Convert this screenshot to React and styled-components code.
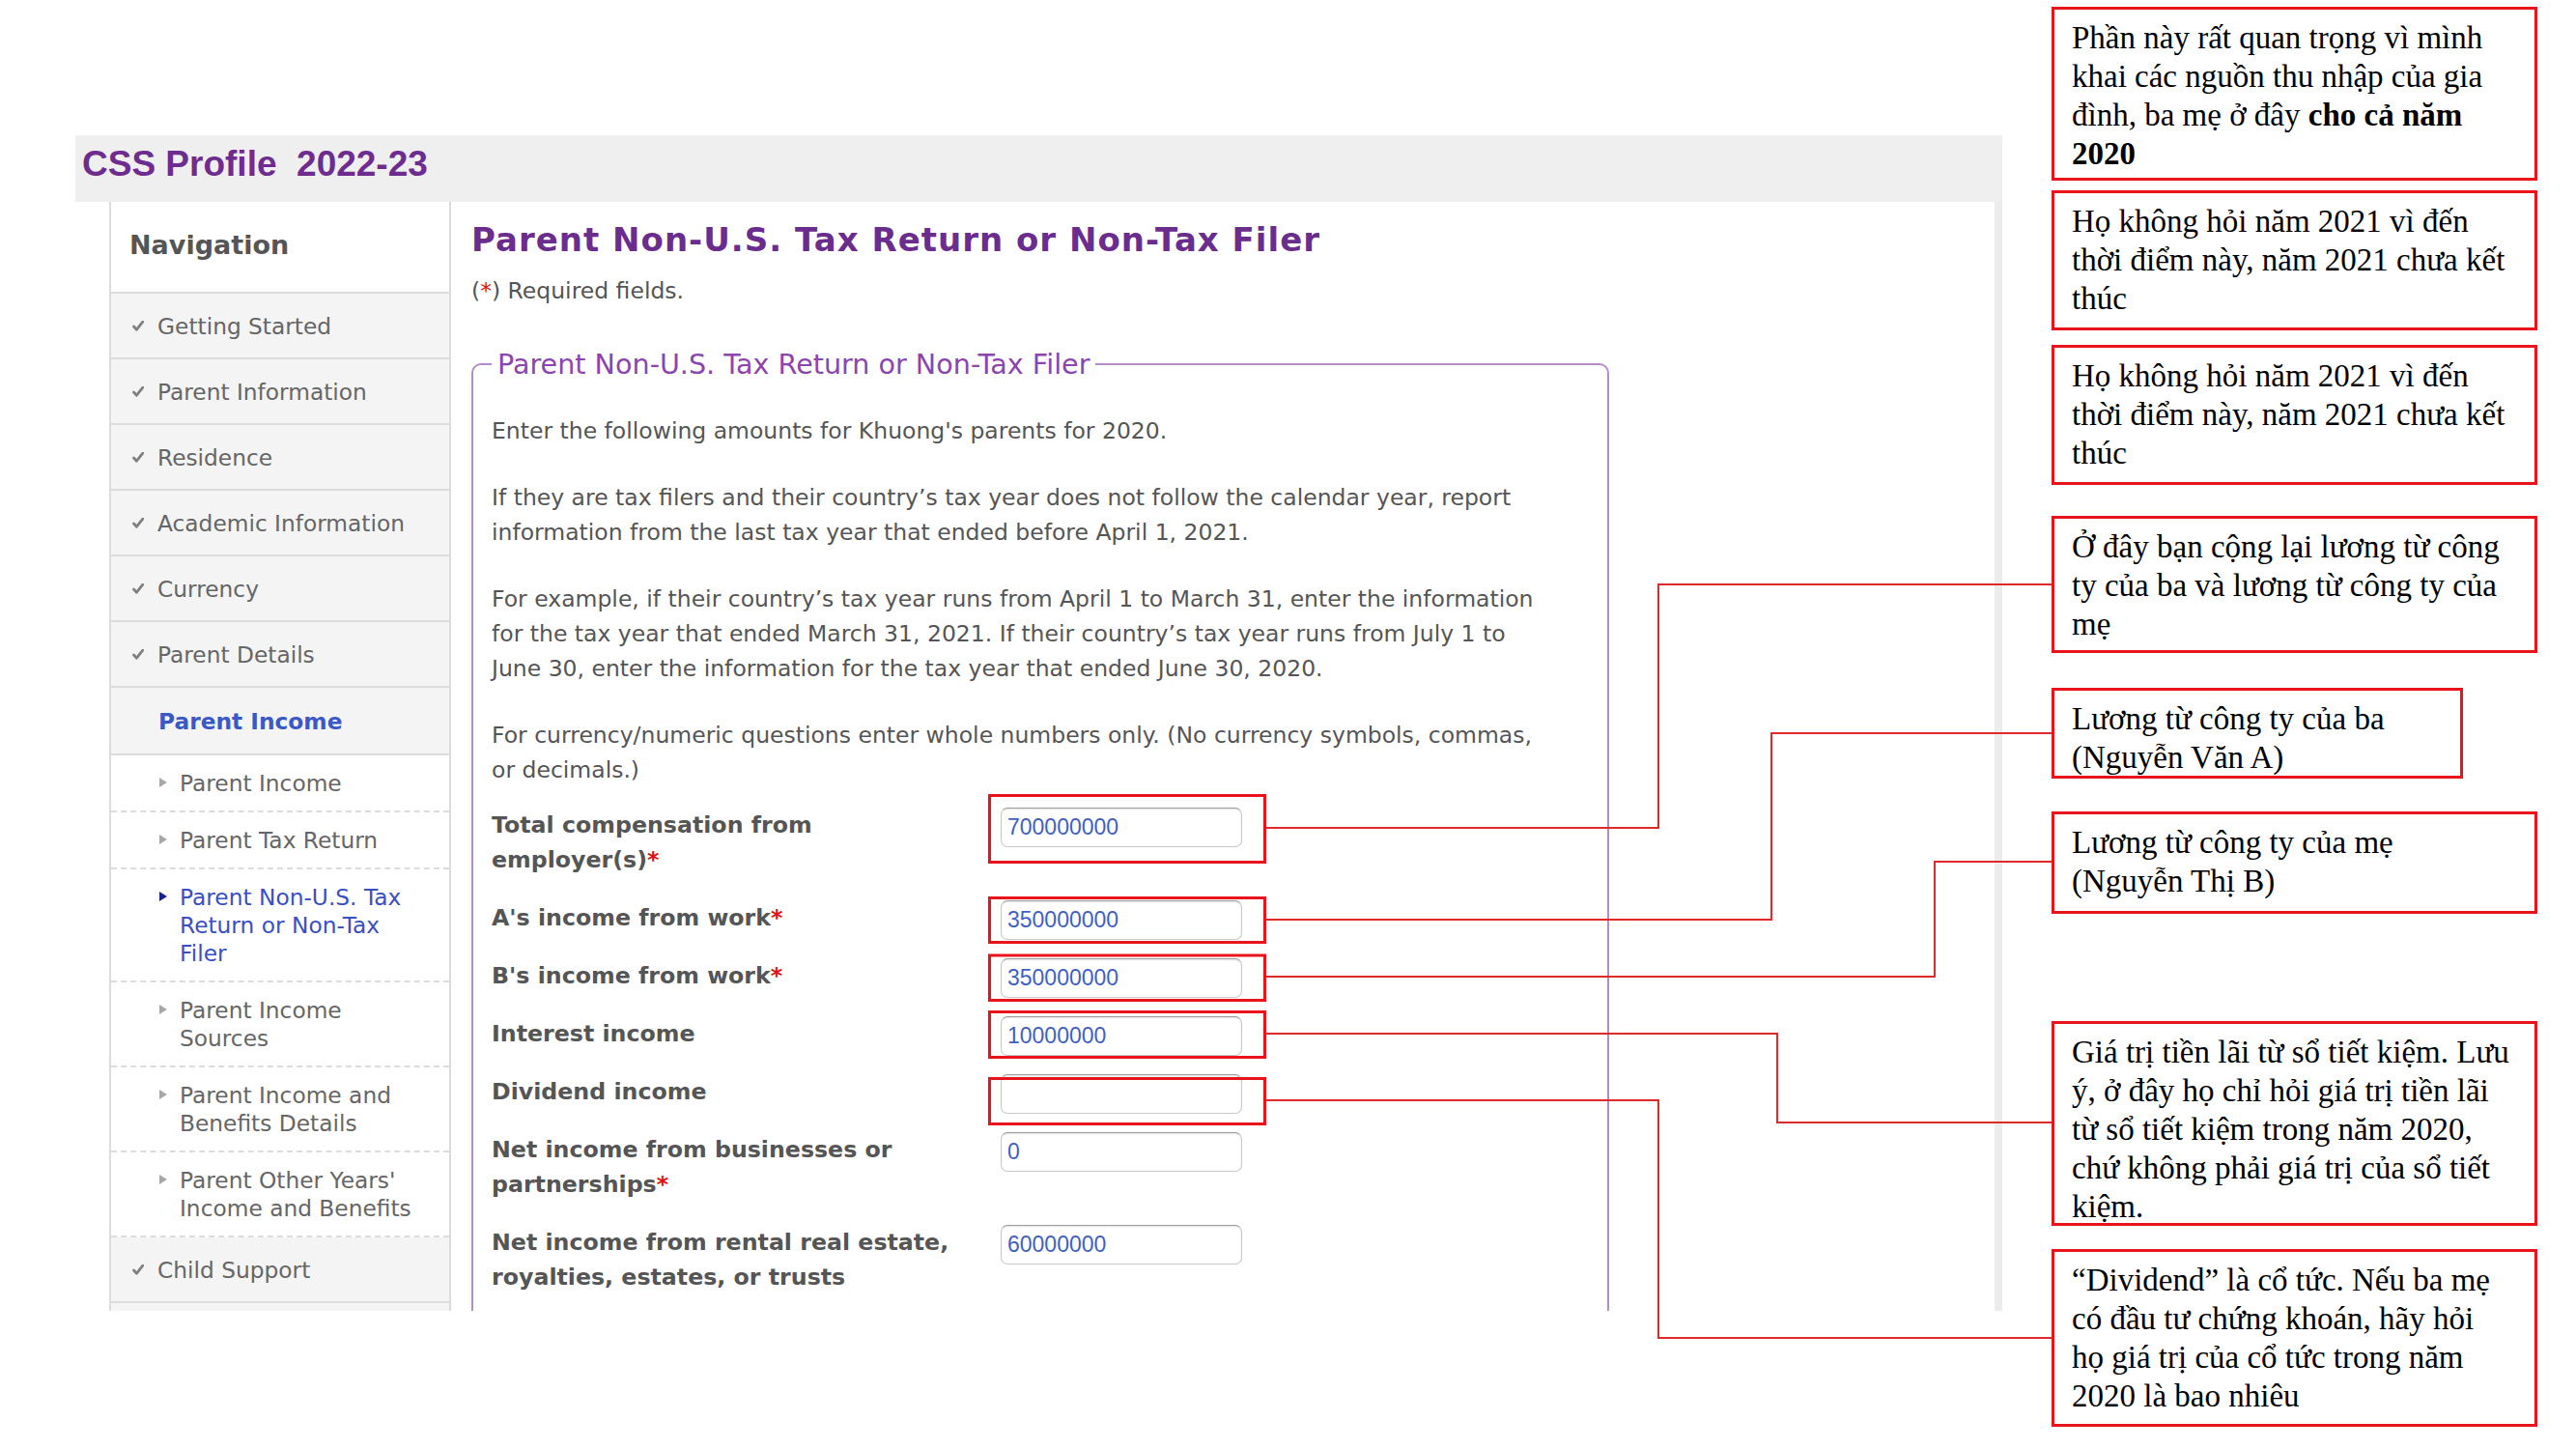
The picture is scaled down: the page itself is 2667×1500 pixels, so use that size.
import React from "react";
import styled, { createGlobalStyle } from "styled-components";

const GlobalStyle = createGlobalStyle`
  html, body {
    margin: 0;
    padding: 0;
    background: #fff;
  }
  body {
    font-family: "DejaVu Sans", Verdana, sans-serif;
  }
  * {
    box-sizing: border-box;
  }
`;

const Canvas = styled.div`
  position: relative;
  width: 2667px;
  height: 1500px;
  display: flex;
  align-items: flex-start;
  overflow: hidden;
  background: #fff;
`;

/* ---------- the CSS Profile screen ---------- */

const Screen = styled.div`
  margin: 140px 0 0 78px;
  width: 1995px;
  height: 1217px;
  flex: none;
  display: flex;
  flex-direction: column;
  overflow: hidden;
`;

const TopBar = styled.header`
  height: 69px;
  flex: none;
  background: #efefef;
  padding: 9px 0 0 7px;
`;

const Brand = styled.h1`
  margin: 0;
  font: bold 37px/42px "Liberation Sans", Arial, sans-serif;
  color: #6d2c8e;
  white-space: pre;
`;

const Body = styled.div`
  flex: 1;
  min-height: 0;
  display: flex;
  padding-left: 35px;
`;

const Sidebar = styled.nav`
  width: 354px;
  flex: none;
  border-left: 2px solid #dcdcdc;
  border-right: 2px solid #dcdcdc;
`;

const NavHead = styled.div`
  height: 95px;
  padding: 29px 0 0 19px;
  border-bottom: 2px solid #dcdcdc;
  font: bold 27px/32px "DejaVu Sans", Verdana, sans-serif;
  color: #555;
`;

const NavItem = styled.div`
  height: ${(p) => (p.$active ? 70 : 68)}px;
  display: flex;
  align-items: center;
  gap: 14px;
  padding-left: ${(p) => (p.$active ? 49 : 22)}px;
  background: #f4f4f4;
  border-bottom: 2px solid #dcdcdc;
  font-size: 23.3px;
  font-weight: ${(p) => (p.$active ? "bold" : "normal")};
  color: ${(p) => (p.$active ? "#3b59c6" : "#666")};
`;

const SubItem = styled.div`
  display: flex;
  align-items: flex-start;
  gap: 13px;
  padding: 14px 0 14px 50px;
  background: #fff;
  border-bottom: 2px dashed #dcdcdc;
  font-size: 23.3px;
  line-height: 29px;
  color: ${(p) => (p.$current ? "#3a4fc2" : "#666")};
  white-space: nowrap;
`;

const Marker = styled.span`
  flex: none;
  width: 0;
  height: 0;
  margin-top: 9px;
  border-left: 8px solid ${(p) => (p.$current ? "#1b1f9c" : "#a8a8a8")};
  border-top: 5px solid transparent;
  border-bottom: 5px solid transparent;
`;

const Main = styled.main`
  flex: 1;
  min-width: 0;
  padding: 19px 21px;
  border-right: 8px solid #ececec;
  color: #555;
`;

const PageTitle = styled.h2`
  margin: 0;
  font: bold 34px/40px "DejaVu Sans", Verdana, sans-serif;
  letter-spacing: 1px;
  color: #6b2d8d;
`;

const Required = styled.p`
  margin: 17px 0 0;
  font-size: 23.5px;
  line-height: 32px;
  color: #555;
`;

const Star = styled.span`
  color: #e01010;
`;

const Fieldset = styled.fieldset`
  width: 1178px;
  margin: 43px 0 0;
  padding: 0 19px 80px;
  border: 2px solid #b58ccb;
  border-radius: 10px;
  min-inline-size: 0;
`;

const Legend = styled.legend`
  padding: 0 6px;
  font-size: 28.6px;
  line-height: 34px;
  color: #8b45ad;
`;

const Note = styled.p`
  margin: 33px 0 0;
  font-size: 23.5px;
  line-height: 36px;
  white-space: nowrap;

  &:first-of-type {
    margin-top: 34px;
  }
`;

const Form = styled.div`
  margin-top: 21px;
  display: grid;
  grid-template-columns: 527px 250px;
  align-items: start;
`;

const Label = styled.label`
  margin-bottom: 24px;
  font: bold 23.7px/36px "DejaVu Sans", Verdana, sans-serif;
  color: #555;
  white-space: nowrap;
`;

const Input = styled.input`
  width: 250px;
  height: 41px;
  margin: 0 0 -5px;
  padding: 0 6px;
  border: 1px solid #c9c9c9;
  border-top-color: #9c9c9c;
  border-radius: 7px;
  box-shadow: inset 0 1px 2px rgba(0, 0, 0, 0.12);
  font: 23px "Liberation Sans", Arial, sans-serif;
  color: #3f5fc4;
  background: #fff;
  outline: none;
`;

/* ---------- annotation call-outs ---------- */

const Notes = styled.aside`
  flex: none;
  margin: 7px 0 0 51px;
  display: flex;
  flex-direction: column;
  align-items: flex-start;
`;

const Callout = styled.div`
  width: ${(p) => p.$w}px;
  height: ${(p) => p.$h}px;
  margin-top: ${(p) => p.$mt}px;
  padding: 9px 10px 0 18px;
  border: 3px solid #e8141c;
  font: 33px/40px "Liberation Serif", "Times New Roman", serif;
  color: #000;
  white-space: nowrap;

  b {
    font-weight: bold;
  }
`;

const Overlay = styled.svg`
  position: absolute;
  left: 0;
  top: 0;
  pointer-events: none;
`;

function Check() {
  return (
    <svg width="12" height="11" viewBox="0 0 12 11">
      <path
        d="M1.5 6 L4.5 9.2 L10.8 1.2"
        fill="none"
        stroke="#808080"
        strokeWidth="2.8"
        strokeLinecap="round"
        strokeLinejoin="round"
      />
    </svg>
  );
}

const doneBefore = [
  "Getting Started",
  "Parent Information",
  "Residence",
  "Academic Information",
  "Currency",
  "Parent Details",
];

const subItems = [
  { id: 1, lines: ["Parent Income"] },
  { id: 2, lines: ["Parent Tax Return"] },
  { id: 3, lines: ["Parent Non-U.S. Tax", "Return or Non-Tax", "Filer"], current: true },
  { id: 4, lines: ["Parent Income", "Sources"] },
  { id: 5, lines: ["Parent Income and", "Benefits Details"] },
  { id: 6, lines: ["Parent Other Years'", "Income and Benefits"] },
];

const fields = [
  { id: 1, label: ["Total compensation from", "employer(s)"], req: true, value: "700000000" },
  { id: 2, label: ["A's income from work"], req: true, value: "350000000" },
  { id: 3, label: ["B's income from work"], req: true, value: "350000000" },
  { id: 4, label: ["Interest income"], value: "10000000" },
  { id: 5, label: ["Dividend income"], value: "" },
  { id: 6, label: ["Net income from businesses or", "partnerships"], req: true, value: "0" },
  { id: 7, label: ["Net income from rental real estate,", "royalties, estates, or trusts"], value: "60000000" },
];

const callouts = [
  {
    id: 1, mt: 0, h: 180, w: 503,
    lines: [
      "Phần này rất quan trọng vì mình",
      "khai các nguồn thu nhập của gia",
      <>đình, ba mẹ ở đây <b>cho cả năm</b></>,
      <b>2020</b>,
    ],
  },
  {
    id: 2, mt: 10, h: 145, w: 503,
    lines: ["Họ không hỏi năm 2021 vì đến", "thời điểm này, năm 2021 chưa kết", "thúc"],
  },
  {
    id: 3, mt: 15, h: 145, w: 503,
    lines: ["Họ không hỏi năm 2021 vì đến", "thời điểm này, năm 2021 chưa kết", "thúc"],
  },
  {
    id: 4, mt: 32, h: 142, w: 503,
    lines: ["Ở đây bạn cộng lại lương từ công", "ty của ba và lương từ công ty của", "mẹ"],
  },
  { id: 5, mt: 36, h: 94, w: 426, lines: ["Lương từ công ty của ba", "(Nguyễn Văn A)"] },
  { id: 6, mt: 34, h: 106, w: 503, lines: ["Lương từ công ty của mẹ", "(Nguyễn Thị B)"] },
  {
    id: 7, mt: 111, h: 212, w: 503,
    lines: [
      "Giá trị tiền lãi từ sổ tiết kiệm. Lưu",
      "ý, ở đây họ chỉ hỏi giá trị tiền lãi",
      "từ sổ tiết kiệm trong năm 2020,",
      "chứ không phải giá trị của sổ tiết",
      "kiệm.",
    ],
  },
  {
    id: 8, mt: 24, h: 184, w: 503,
    lines: [
      "“Dividend” là cổ tức. Nếu ba mẹ",
      "có đầu tư chứng khoán, hãy hỏi",
      "họ giá trị của cổ tức trong năm",
      "2020 là bao nhiêu",
    ],
  },
];

// highlight boxes round the inputs, and the elbow lines to the call-outs
const highlights = [
  { y: 823.5, h: 69 },
  { y: 929.5, h: 46 },
  { y: 989, h: 46.5 },
  { y: 1047.5, h: 47 },
  { y: 1116.5, h: 47 },
];

const connectors = [
  "M1311 857 H1717 V605 H2124",
  "M1311 952 H1834 V759 H2124",
  "M1311 1011 H2003 V892 H2124",
  "M1311 1070 H1840 V1162 H2124",
  "M1311 1139 H1717 V1385 H2124",
];

function Lines({ lines }) {
  return lines.map((line, i) => (
    <React.Fragment key={i}>
      {i > 0 && <br />}
      {line}
    </React.Fragment>
  ));
}

export default function App() {
  return (
    <>
      <GlobalStyle />
      <Canvas>
        <Screen>
          <TopBar>
            <Brand>CSS Profile  2022-23</Brand>
          </TopBar>
          <Body>
            <Sidebar>
              <NavHead>Navigation</NavHead>
              {doneBefore.map((label) => (
                <NavItem key={label}>
                  <Check />
                  {label}
                </NavItem>
              ))}
              <NavItem $active>Parent Income</NavItem>
              {subItems.map(({ id, lines, current }) => (
                <SubItem key={id} $current={current}>
                  <Marker $current={current} />
                  <span>
                    <Lines lines={lines} />
                  </span>
                </SubItem>
              ))}
              <NavItem>
                <Check />
                Child Support
              </NavItem>
              <NavItem />
            </Sidebar>

            <Main>
              <PageTitle>Parent Non-U.S. Tax Return or Non-Tax Filer</PageTitle>
              <Required>
                (<Star>*</Star>) Required fields.
              </Required>

              <Fieldset>
                <Legend>Parent Non-U.S. Tax Return or Non-Tax Filer</Legend>
                <Note>Enter the following amounts for Khuong's parents for 2020.</Note>
                <Note>
                  If they are tax filers and their country’s tax year does not follow the calendar year, report
                  <br />
                  information from the last tax year that ended before April 1, 2021.
                </Note>
                <Note>
                  For example, if their country’s tax year runs from April 1 to March 31, enter the information
                  <br />
                  for the tax year that ended March 31, 2021. If their country’s tax year runs from July 1 to
                  <br />
                  June 30, enter the information for the tax year that ended June 30, 2020.
                </Note>
                <Note>
                  For currency/numeric questions enter whole numbers only. (No currency symbols, commas,
                  <br />
                  or decimals.)
                </Note>

                <Form>
                  {fields.map(({ id, label, req, value }) => (
                    <React.Fragment key={id}>
                      <Label htmlFor={`f${id}`}>
                        <Lines lines={label} />
                        {req && <Star>*</Star>}
                      </Label>
                      <Input id={`f${id}`} type="text" defaultValue={value} readOnly />
                    </React.Fragment>
                  ))}
                </Form>
              </Fieldset>
            </Main>
          </Body>
        </Screen>

        <Notes>
          {callouts.map(({ id, mt, h, w, lines }) => (
            <Callout key={id} $mt={mt} $h={h} $w={w}>
              <Lines lines={lines} />
            </Callout>
          ))}
        </Notes>

        <Overlay width="2667" height="1500" viewBox="0 0 2667 1500">
          {highlights.map(({ y, h }) => (
            <rect key={y} x="1024.5" y={y} width="285" height={h} fill="none" stroke="#e8141c" strokeWidth="3" />
          ))}
          {connectors.map((d) => (
            <path key={d} d={d} fill="none" stroke="#e02a2a" strokeWidth="2" />
          ))}
        </Overlay>
      </Canvas>
    </>
  );
}
